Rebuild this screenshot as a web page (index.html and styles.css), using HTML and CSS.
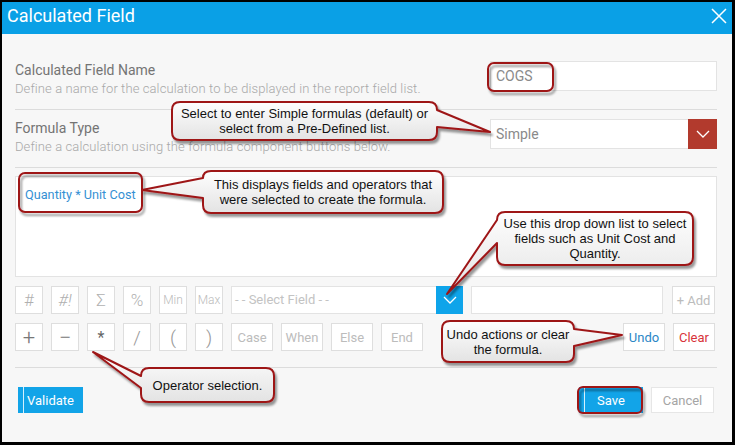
FILE: index.html
```html
<!DOCTYPE html>
<html lang="en">
<head>
    <meta charset="UTF-8">
    <meta name="viewport" content="width=device-width, initial-scale=1.0">
    <title>Calculated Field</title>
    <link rel="stylesheet" href="styles.css">
</head>
<body>
    <div class="dialog">
        <div class="dialog-header">
            <h1>Calculated Field</h1>
            <svg class="close" width="16" height="16" viewBox="0 0 16 16"><path d="M1 1L15 15M15 1L1 15" stroke="#fff" stroke-width="1.5" fill="none"/></svg>
        </div>
        <div class="dialog-body">
            <div class="section">
                <div class="section-text">
                    <div class="label">Calculated Field Name</div>
                    <div class="hint">Define a name for the calculation to be displayed in the report field list.</div>
                </div>
                <div class="text-input">COGS</div>
            </div>
            <div class="section">
                <div class="section-text">
                    <div class="label">Formula Type</div>
                    <div class="hint">Define a calculation using the formula component buttons below.</div>
                </div>
                <div class="select type-select">
                    <span class="select-value">Simple</span>
                    <span class="select-arrow"><svg width="14" height="8" viewBox="0 0 14 8"><path d="M1 1L7 7L13 1" stroke="#fff" stroke-width="1.3" fill="none"/></svg></span>
                </div>
            </div>
            <div class="formula-box"><span class="formula">Quantity * Unit Cost</span></div>
            <div class="btn-row">
                <div class="btn op">#</div>
                <div class="btn op italic">#!</div>
                <div class="btn op">&Sigma;</div>
                <div class="btn op">%</div>
                <div class="btn op small">Min</div>
                <div class="btn op small">Max</div>
                <div class="select field-select">
                    <span class="select-value">- - Select Field - -</span>
                    <span class="select-arrow"><svg width="14" height="8" viewBox="0 0 14 8"><path d="M1 1L7 7L13 1" stroke="#fff" stroke-width="1.3" fill="none"/></svg></span>
                </div>
                <div class="text-input blank"></div>
                <div class="btn word add">+ Add</div>
            </div>
            <div class="btn-row">
                <div class="btn op dark">+</div>
                <div class="btn op dark">&minus;</div>
                <div class="btn op star">*</div>
                <div class="btn op thin">/</div>
                <div class="btn op thin">(</div>
                <div class="btn op thin">)</div>
                <div class="btn word">Case</div>
                <div class="btn word">When</div>
                <div class="btn word">Else</div>
                <div class="btn word">End</div>
                <div class="btn word undo">Undo</div>
                <div class="btn word clear">Clear</div>
            </div>
            <div class="footer">
                <div class="btn primary validate">Validate</div>
                <div class="btn primary save">Save</div>
                <div class="btn cancel">Cancel</div>
            </div>
        </div>
    </div>

    <!-- annotation callouts drawn over the dialog -->
    <div class="notes">
        <svg class="bubbles" width="735" height="445" viewBox="0 0 735 445">
            <defs>
                <linearGradient id="bub" x1="0" y1="0" x2="0" y2="1">
                    <stop offset="0" stop-color="#fefefe"/>
                    <stop offset="1" stop-color="#e3e3e3"/>
                </linearGradient>
                <filter id="sh" x="-10%" y="-20%" width="130%" height="150%">
                    <feDropShadow dx="2" dy="3" stdDeviation="1" flood-color="#000" flood-opacity="0.4"/>
                </filter>
            </defs>
            <g fill="none" stroke="#9e1519" stroke-width="2" filter="url(#sh)">
                <rect x="488" y="63" width="65" height="28" rx="6"/>
                <rect x="19" y="173" width="123" height="39" rx="6"/>
                <rect x="578" y="387" width="64" height="26" rx="5"/>
            </g>
            <g fill="url(#bub)" stroke="#9e1519" stroke-width="2" stroke-linejoin="round" filter="url(#sh)">
                <path d="M180 102H429Q437 102 437 110L490 132L437 127V132Q437 140 429 140H180Q172 140 172 132V110Q172 102 180 102Z"/>
                <path d="M211 171H435Q443 171 443 179V205Q443 213 435 213H211Q203 213 203 205V198L142 190L203 178Q203 171 211 171Z"/>
                <path d="M505 212H685Q693 212 693 220V257Q693 265 685 265H505Q497 265 497 257V243L447 294L497 220Q497 212 505 212Z"/>
                <path d="M450 321H566Q574 321 574 329L622 335L574 346V354Q574 362 566 362H450Q442 362 442 354V329Q442 321 450 321Z"/>
                <path d="M149 368H266Q274 368 274 376V394Q274 402 266 402H149Q141 402 141 394V388L93 352L141 376Q141 368 149 368Z"/>
            </g>
        </svg>
        <div class="note note-type">Select to enter Simple formulas (default) or<br>select from a Pre-Defined list.</div>
        <div class="note note-formula">This displays fields and operators that<br>were selected to create the formula.</div>
        <div class="note note-field">Use this drop down list to select<br>fields such as Unit Cost and<br>Quantity.</div>
        <div class="note note-undo">Undo actions or clear<br>the formula.</div>
        <div class="note note-op">Operator selection.</div>
    </div>
</body>
</html>
```

FILE: styles.css
```css
body {
    margin: 0;
    background-color: #000;
    font-family: Roboto, "Noto Sans", sans-serif;
}
.dialog {
    width: 730px;
    height: 440px;
    margin: 2px 0 0 2px;
    background-color: #f7f7f7;
}
.dialog-header {
    height: 32px;
    padding: 0 5px;
    display: flex;
    justify-content: space-between;
    background-color: #0aa0e6;
}
.dialog-header h1 {
    margin: 0;
    font-size: 18px;
    font-weight: 400;
    line-height: 28px;
    color: #fff;
}
.close {
    margin-top: 6px;
}
.dialog-body {
    padding: 18px 15px 0 13px;
}
.section {
    height: 57px;
    display: flex;
    justify-content: space-between;
    align-items: flex-start;
    border-bottom: 1px solid #dcdcdc;
}
.section-text {
    padding-top: 8px;
}
.label {
    font-size: 14px;
    line-height: 20px;
    color: #747474;
}
.hint {
    font-size: 13px;
    font-weight: 300;
    line-height: 18px;
    letter-spacing: 0.1px;
    color: #a8a8a8;
}
.text-input {
    width: 227px;
    height: 30px;
    margin-top: 9px;
    box-sizing: border-box;
    padding-left: 5px;
    border: 1px solid #e3e3e3;
    background-color: #fff;
    font-size: 14px;
    line-height: 28px;
    color: #8a8a8a;
}
.select {
    display: flex;
    box-sizing: border-box;
    border: 1px solid #e3e3e3;
    background-color: #fff;
}
.select-value {
    flex: 1;
    padding-left: 5px;
}
.select-arrow {
    display: flex;
    align-items: center;
    justify-content: center;
}
.type-select {
    width: 227px;
    height: 30px;
    margin-top: 9px;
    font-size: 14px;
    line-height: 28px;
    color: #8a8a8a;
}
.type-select .select-arrow {
    width: 29px;
    margin: -1px -1px -1px 0;
    background-color: #b23a2d;
}
.formula-box {
    height: 101px;
    margin-top: 8px;
    box-sizing: border-box;
    padding: 7px 9px;
    border: 1px solid #e3e3e3;
    background-color: #fff;
}
.formula {
    font-size: 12.7px;
    line-height: 16px;
    color: #3590d3;
}
.btn-row {
    height: 28px;
    margin-top: 9px;
    display: flex;
    gap: 8px;
    padding-right: 2px;
}
.btn {
    height: 28px;
    box-sizing: border-box;
    display: flex;
    align-items: center;
    justify-content: center;
    border: 1px solid #dedede;
    background-color: #fff;
}
.op {
    width: 28px;
    font-size: 17px;
    font-weight: 300;
    color: #b0b0b0;
}
.op.italic {
    font-style: italic;
}
.op.small {
    font-size: 12px;
    color: #bbb;
}
.op.dark {
    font-size: 22px;
    color: #777;
}
.op.star {
    font-size: 16px;
    font-weight: 400;
    color: #666;
}
.op.thin {
    font-size: 19px;
    color: #999;
}
.field-select {
    width: 232px;
    height: 28px;
    font-size: 13px;
    line-height: 26px;
    color: #c3c3c3;
}
.field-select .select-value {
    padding-left: 3px;
}
.field-select .select-arrow {
    width: 27px;
    margin: -1px -1px -1px 0;
    background-color: #0ea4ea;
}
.text-input.blank {
    width: 192px;
    height: 28px;
    margin-top: 0;
}
.word {
    width: 42px;
    font-size: 13px;
    color: #bcbcbc;
}
.word.add {
    width: 43px;
    margin-left: 1px;
}
.word.undo {
    margin-left: auto;
    color: #2b86c6;
}
.word.clear {
    color: #d8343b;
}
.footer {
    margin-top: 16px;
    padding: 19px 3px 0 3px;
    display: flex;
    gap: 8px;
    border-top: 1px solid #dcdcdc;
}
.primary {
    width: 65px;
    height: 26px;
    border: none;
    background-color: #12a4e8;
    box-shadow: inset 5px 0 0 #12a4e8, inset 6px 0 0 #d5f0fc;
    font-size: 13px;
    color: #fff;
}
.save {
    width: 64px;
    margin-left: auto;
}
.cancel {
    width: 63px;
    height: 26px;
    border-color: #e6e6e6;
    font-size: 13px;
    color: #a5a5a5;
}
.notes {
    position: absolute;
    left: 0;
    top: 0;
    width: 735px;
    height: 445px;
    pointer-events: none;
}
.bubbles {
    position: absolute;
    left: 0;
    top: 0;
}
.note {
    position: absolute;
    display: flex;
    align-items: center;
    justify-content: center;
    text-align: center;
    font-family: "Liberation Sans", Arial, sans-serif;
    font-size: 13px;
    line-height: 15px;
    color: #111;
}
.note-type {
    left: 172px;
    top: 102px;
    width: 265px;
    height: 38px;
}
.note-formula {
    left: 203px;
    top: 171px;
    width: 240px;
    height: 42px;
}
.note-field {
    left: 497px;
    top: 212px;
    width: 196px;
    height: 53px;
}
.note-undo {
    left: 442px;
    top: 321px;
    width: 132px;
    height: 41px;
}
.note-op {
    left: 141px;
    top: 368px;
    width: 133px;
    height: 34px;
}
```
